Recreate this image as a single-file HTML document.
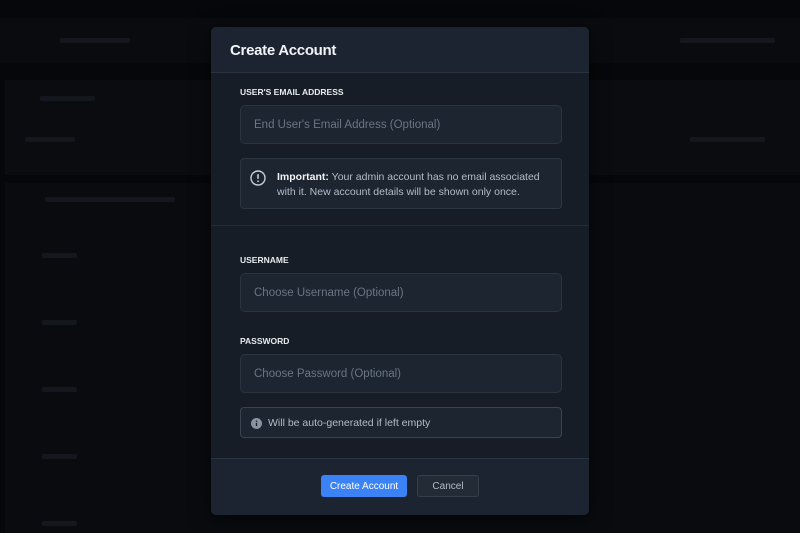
<!DOCTYPE html>
<html><head><meta charset="utf-8"><style>
*{box-sizing:border-box;margin:0;padding:0}
body{width:800px;height:533px;background:#06070a;font-family:"Liberation Sans",sans-serif;position:relative;overflow:hidden}
.b{position:absolute;background:#0a0c10}
.t{position:absolute;background:#14181e;height:5px;border-radius:2px}
.modal{position:absolute;left:211px;top:27px;width:378px;height:488px;background:#161d26;border-radius:5px;overflow:hidden;box-shadow:0 4px 20px rgba(0,0,0,.6)}
.hd{height:46px;background:#1b2430;border-bottom:1px solid #2a3441;padding:15px 19px;color:#f2f4f7;font-size:15px;font-weight:bold;letter-spacing:-.3px}
.lbl{position:absolute;left:29px;color:#e8ebef;font-size:8.5px;font-weight:bold}
.in{position:absolute;left:29px;width:322px;height:39px;background:#1c2530;border:1px solid #2a3441;border-radius:5px;color:#6b7583;font-size:11.5px;padding:13px 13px 0}
.box{position:absolute;left:29px;width:322px;background:#1c2530;border:1px solid #2c3643;border-radius:4px;color:#b5bcc6;font-size:10.5px}
.ft{position:absolute;left:0;top:431px;width:378px;height:57px;background:#1b2430;border-top:1px solid #2a3441}
.btn{position:absolute;top:16px;height:22px;border-radius:3px;font-size:10px;text-align:center;line-height:22px}
</style></head><body>
<div class="b" style="left:0;top:18px;width:800px;height:45px;background:#090b0e"></div>
<div class="b" style="left:5px;top:80px;width:795px;height:95px"></div>
<div class="b" style="left:5px;top:183px;width:795px;height:350px;background:#090b0f"></div>
<div class="t" style="left:60px;top:38px;width:70px"></div>
<div class="t" style="left:680px;top:38px;width:95px"></div>
<div class="t" style="left:40px;top:96px;width:55px"></div>
<div class="t" style="left:45px;top:197px;width:130px"></div>
<div class="t" style="left:25px;top:137px;width:50px"></div>
<div class="t" style="left:42px;top:253px;width:35px"></div>
<div class="t" style="left:42px;top:320px;width:35px"></div>
<div class="t" style="left:42px;top:387px;width:35px"></div>
<div class="t" style="left:42px;top:454px;width:35px"></div>
<div class="t" style="left:42px;top:521px;width:35px"></div>
<div class="t" style="left:690px;top:137px;width:75px"></div>
<div class="modal">
<div class="hd">Create Account</div>
<div class="lbl" style="top:60px">USER'S EMAIL ADDRESS</div>
<div class="in" style="top:78px">End User's Email Address (Optional)</div>
<div class="box" style="top:131px;height:51px;padding:11px 10px 0 36px;line-height:15px">
<svg style="position:absolute;left:9px;top:11px" width="16" height="16" viewBox="0 0 16 16"><circle cx="8" cy="8" r="7" fill="none" stroke="#c9ced6" stroke-width="1.4"/><path d="M8 4.2v4.6" stroke="#c9ced6" stroke-width="1.6"/><circle cx="8" cy="11.3" r=".9" fill="#c9ced6"/></svg>
<b style="color:#f1f3f6">Important:</b> Your admin account has no email associated with it. New account details will be shown only once.</div>
<div style="position:absolute;left:0;top:198px;width:378px;border-top:1px solid #222b36"></div>
<div class="lbl" style="top:228px">USERNAME</div>
<div class="in" style="top:246px">Choose Username (Optional)</div>
<div class="lbl" style="top:309px">PASSWORD</div>
<div class="in" style="top:327px">Choose Password (Optional)</div>
<div class="box" style="top:380px;height:31px;padding:9px 0 0 27px;border-color:#3a4350">
<svg style="position:absolute;left:10px;top:10px" width="11" height="11" viewBox="0 0 12 12"><circle cx="6" cy="6" r="6" fill="#8a93a0"/><path d="M6 5.2v3.6" stroke="#1c2530" stroke-width="1.5"/><circle cx="6" cy="3.4" r=".85" fill="#1c2530"/></svg>
Will be auto-generated if left empty</div>
<div class="ft">
<div class="btn" style="left:110px;width:86px;background:#3b82f6;color:#fff;line-height:23px">Create Account</div>
<div class="btn" style="left:206px;width:62px;background:#222b36;border:1px solid #353f4c;color:#b5bcc6;line-height:21px">Cancel</div>
</div>
</div>
</body></html>
